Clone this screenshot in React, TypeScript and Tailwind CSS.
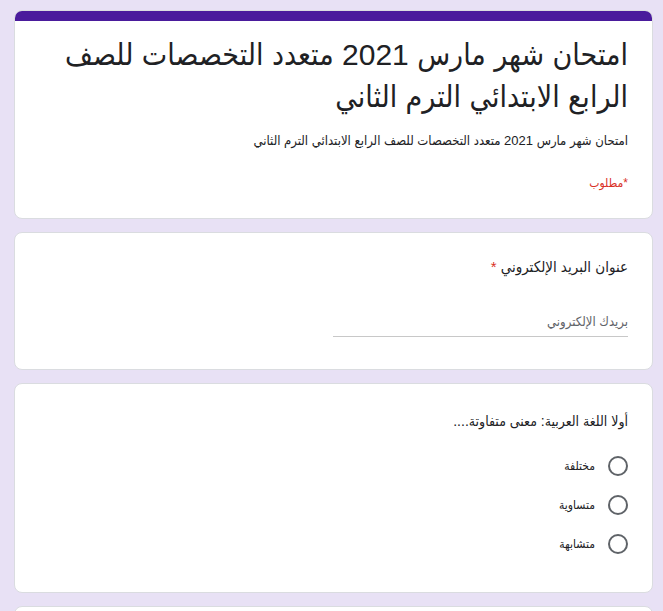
const font = { fontFamily: '"Liberation Sans", "DejaVu Sans Condensed", "DejaVu Sans", Arial, sans-serif' };

const options = ["مختلفة", "متساوية", "متشابهة"];

function Card({ children, className = "" }: { children: React.ReactNode; className?: string }) {
  return (
    <div className={`rounded-lg border border-[#dadce0] bg-white ${className}`}>{children}</div>
  );
}

export default function App() {
  return (
    <div
      dir="rtl"
      className="h-[611px] overflow-hidden bg-[#e8e1f5] pl-[14px] pr-[10px] pt-[10px]"
      style={font}
    >
      <div className="flex flex-col gap-[13px]">
        {/* header card */}
        <div className="overflow-hidden rounded-lg border border-[#dadce0] bg-white">
          <div className="h-[10px] bg-[#4a1b9c]" />
          <div className="px-6 pb-[25px] pt-[13px]">
            <h1 className="text-[30px] leading-[42px] text-[#202124]">
              امتحان شهر مارس 2021 متعدد التخصصات للصف
              <br />
              الرابع الابتدائي الترم الثاني
            </h1>
            <p className="mt-[13px] text-[13px] leading-5 text-[#202124]">
              امتحان شهر مارس 2021 متعدد التخصصات للصف الرابع الابتدائي الترم الثاني
            </p>
            <p className="mt-[22px] text-[12px] leading-5 text-[#d93025]">*مطلوب</p>
          </div>
        </div>

        {/* email */}
        <Card className="px-6 pb-[32px] pt-[22px]">
          <div className="text-[15px] leading-6 text-[#202124]">
            عنوان البريد الإلكتروني <span className="text-[#d93025]">*</span>
          </div>
          <div className="mt-[33px] w-[295px] border-b border-[#c8c8c8] pb-[4px] text-[13px] leading-5 text-[#5f6368]">
            بريدك الإلكتروني
          </div>
        </Card>

        {/* question */}
        <Card className="px-6 pb-[38px] pt-[25px]">
          <div className="text-[14px] leading-6 text-[#202124]">أولا اللغة العربية: معنى متفاوتة....</div>
          <div className="mt-[23px] flex flex-col gap-[19px]">
            {options.map((o) => (
              <label key={o} className="flex items-center gap-[13px]">
                <span className="h-5 w-5 rounded-full border-2 border-[#5f6368]" />
                <span className="text-[12px] leading-5 text-[#202124]">{o}</span>
              </label>
            ))}
          </div>
        </Card>

        <Card className="h-[40px]" />
      </div>
    </div>
  );
}
